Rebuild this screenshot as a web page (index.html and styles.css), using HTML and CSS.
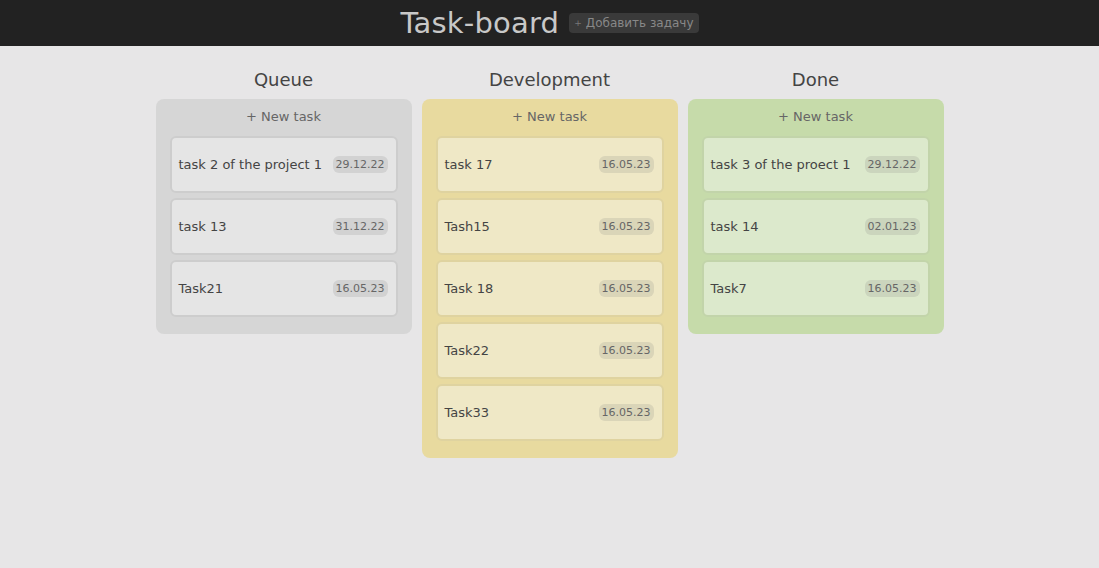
FILE: index.html
```html
<!DOCTYPE html>
<html lang="ru">
<head>
<meta charset="utf-8">
<title>Task-board</title>
<link rel="stylesheet" href="styles.css">
</head>
<body>
<header class="topbar">
  <h1 class="title">Task-board</h1>
  <button class="add-btn"><span class="add-plus">+</span>Добавить задачу</button>
</header>
<main class="board">
  <section class="column queue">
    <h2 class="col-title">Queue</h2>
    <div class="col-body">
      <div class="new-task">+ New task</div>
      <div class="card"><span class="card-name">task 2 of the project 1</span><span class="date">29.12.22</span></div>
      <div class="card"><span class="card-name">task 13</span><span class="date">31.12.22</span></div>
      <div class="card"><span class="card-name">Task21</span><span class="date">16.05.23</span></div>
    </div>
  </section>
  <section class="column dev">
    <h2 class="col-title">Development</h2>
    <div class="col-body">
      <div class="new-task">+ New task</div>
      <div class="card"><span class="card-name">task 17</span><span class="date">16.05.23</span></div>
      <div class="card"><span class="card-name">Tash15</span><span class="date">16.05.23</span></div>
      <div class="card"><span class="card-name">Task 18</span><span class="date">16.05.23</span></div>
      <div class="card"><span class="card-name">Task22</span><span class="date">16.05.23</span></div>
      <div class="card"><span class="card-name">Task33</span><span class="date">16.05.23</span></div>
    </div>
  </section>
  <section class="column done">
    <h2 class="col-title">Done</h2>
    <div class="col-body">
      <div class="new-task">+ New task</div>
      <div class="card"><span class="card-name">task 3 of the proect 1</span><span class="date">29.12.22</span></div>
      <div class="card"><span class="card-name">task 14</span><span class="date">02.01.23</span></div>
      <div class="card"><span class="card-name">Task7</span><span class="date">16.05.23</span></div>
    </div>
  </section>
</main>
</body>
</html>
```

FILE: styles.css
```css
* { box-sizing: border-box; }
html, body { margin: 0; padding: 0; }
body {
  background: #e7e6e7;
  font-family: "DejaVu Sans", "Liberation Sans", sans-serif;
  color: #444;
}
.topbar {
  height: 46px;
  background: #222;
  display: flex;
  align-items: center;
  justify-content: center;
  gap: 10px;
}
.title {
  margin: 0;
  font-weight: normal;
  font-size: 29px;
  color: #c8c8c8;
  letter-spacing: 0.2px;
}
.add-btn {
  font-family: inherit;
  font-size: 12px;
  color: #888;
  background: #3a3a3a;
  border: none;
  border-radius: 4px;
  height: 20px;
  padding: 0 5px;
  display: flex;
  align-items: center;
  gap: 4px;
}
.add-plus { font-size: 9px; color: #777; }
.board {
  display: flex;
  justify-content: center;
  gap: 10px;
  align-items: flex-start;
  padding-top: 23px;
}
.column { width: 256px; }
.col-title {
  margin: 0 0 8px;
  height: 22px;
  line-height: 22px;
  text-align: center;
  font-weight: normal;
  font-size: 18px;
  color: #444;
}
.col-body {
  border-radius: 8px;
  padding: 8px 14px 17px;
  display: flex;
  flex-direction: column;
  gap: 5px;
}
.new-task {
  text-align: center;
  font-size: 13px;
  color: #666;
  height: 20px;
  line-height: 20px;
  margin-bottom: 4px;
}
.card {
  height: 57px;
  border-radius: 6px;
  border: 2px solid;
  display: flex;
  align-items: center;
  justify-content: space-between;
  padding: 0 8px 0 7px;
  font-size: 13px;
  color: #444;
}
.date {
  font-size: 11px;
  color: #666;
  background: rgba(120, 120, 120, 0.17);
  border-radius: 6px;
  padding: 2px 3px;
}
.queue .col-body { background: #d6d6d6; }
.queue .card { background: #e5e5e5; border-color: #cdcdcd; }
.dev .col-body { background: #e8da9f; }
.dev .card { background: #efe8c6; border-color: #dfd3a0; }
.done .col-body { background: #c6dbaa; }
.done .card { background: #dce9cc; border-color: #c2d4aa; }
```
